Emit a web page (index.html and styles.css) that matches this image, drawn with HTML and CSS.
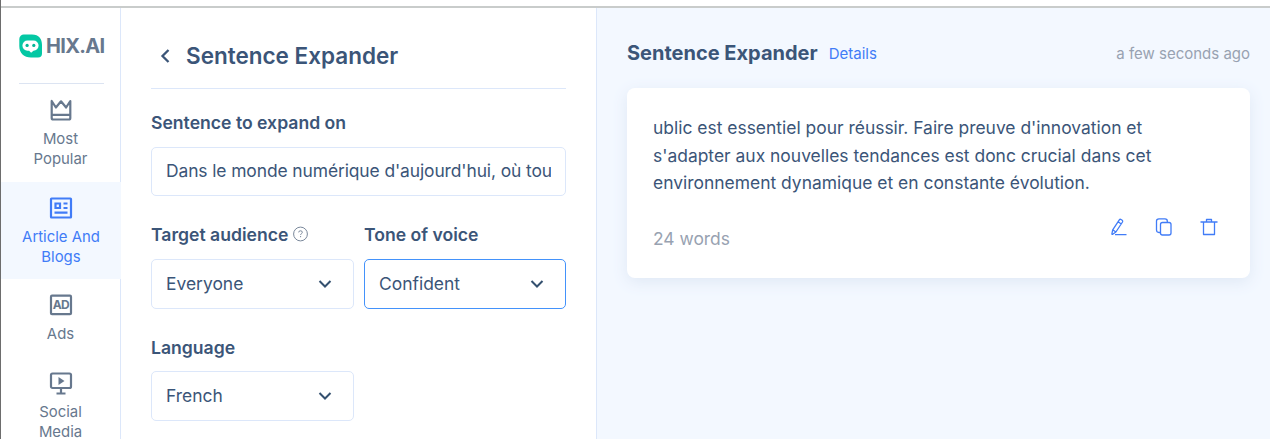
FILE: index.html
```html
<!DOCTYPE html>
<html lang="en">
<head>
<meta charset="utf-8">
<title>HIX.AI - Sentence Expander</title>
<link rel="stylesheet" href="styles.css">
</head>
<body>
<div class="app">
  <nav class="sidebar">
    <div class="logo">
      <svg width="24" height="24" viewBox="0 0 24 24"><path d="M5 .5h8C20 .5 23 5 23 11v8.500a4 4 0 0 1-4 4h-7C5 23.500.3 19 .3 12V5A4.500 4.500 0 0 1 5 .5z" fill="#04c8a4"/><path d="M8.500 6.500h6a5 5 0 0 1 0 10.200l-2.400 2.100-2-2.100H8.500a5 5 0 0 1 0-10.200z" fill="#fff"/><circle cx="8.100" cy="11.400" r="1.600" fill="#04b696"/><circle cx="14.800" cy="11.400" r="1.600" fill="#04b696"/></svg>
      <span class="brand">HIX.AI</span>
    </div>
    <a class="item">
      <svg width="24" height="24" viewBox="0 0 24 24" fill="none" stroke="currentColor" stroke-width="2.200" stroke-linejoin="round"><path d="M2.700 3v17q0 1.500 1.500 1.500h15.600q1.500 0 1.500-1.500V3l-4.200 6.500L12 3.300 6.900 9.500zM2.700 16.800h18.600"/></svg>
      <span>Most<br>Popular</span>
    </a>
    <a class="item active">
      <svg width="24" height="24" viewBox="0 0 24 24" fill="none" stroke="currentColor" stroke-width="2.200"><rect x="2" y="2.500" width="20" height="19" rx=".5"/><path d="M6.500 7.500h4.500v4.500H6.500zM14.500 7.500h4M14.500 12h4M5.500 16.700h13"/></svg>
      <span>Article And<br>Blogs</span>
    </a>
    <a class="item">
      <svg width="24" height="24" viewBox="0 0 24 24"><rect x="2" y="2.700" width="20" height="18.500" rx="1" fill="none" stroke="currentColor" stroke-width="2.200"/><text class="ad" x="11.800" y="16.200" text-anchor="middle">AD</text></svg>
      <span>Ads</span>
    </a>
    <a class="item">
      <svg width="24" height="24" viewBox="0 0 24 24" fill="none" stroke="currentColor" stroke-width="2.200"><rect x="2" y="2.500" width="20" height="14.500" rx="1.500"/><path d="M12 17v5.500M7.500 22.500h9"/><path d="M9.500 6v8l6-4z" fill="currentColor" stroke="none"/></svg>
      <span>Social<br>Media</span>
    </a>
  </nav>

  <section class="form">
    <header class="form-head">
      <svg width="12" height="16" viewBox="0 0 12 16" fill="none" stroke="currentColor" stroke-width="2.300"><path d="M9.500 2L3.500 8l6 6"/></svg>
      <h1>Sentence Expander</h1>
    </header>
    <div class="field">
      <label>Sentence to expand on</label>
      <div class="box"><span class="value">Dans le monde numérique d'aujourd'hui, où tou</span></div>
    </div>
    <div class="grid">
      <div class="field">
        <label>Target audience <svg width="16" height="16" viewBox="0 0 16 16" fill="none" stroke="#7a889b"><circle cx="7.500" cy="8" r="6.900"/><path d="M5.700 6.400q0-1.600 1.800-1.600t1.800 1.500q0 .9-1 1.500-.7.500-.7 1.200M7.600 10v1.200"/></svg></label>
        <div class="box select"><span>Everyone</span><svg width="14" height="10" viewBox="0 0 14 10"><path d="M1.500 2L7 7.500 12.500 2"/></svg></div>
      </div>
      <div class="field">
        <label>Tone of voice</label>
        <div class="box select focus"><span>Confident</span><svg width="14" height="10" viewBox="0 0 14 10"><path d="M1.500 2L7 7.500 12.500 2"/></svg></div>
      </div>
      <div class="field">
        <label class="low">Language</label>
        <div class="box select"><span>French</span><svg width="14" height="10" viewBox="0 0 14 10"><path d="M1.500 2L7 7.500 12.500 2"/></svg></div>
      </div>
    </div>
  </section>

  <main class="results">
    <header class="result-head">
      <h2>Sentence Expander</h2>
      <a class="details">Details</a>
      <time>a few seconds ago</time>
    </header>
    <article class="card">
      <p>ublic est essentiel pour réussir. Faire preuve d'innovation et<br>s'adapter aux nouvelles tendances est donc crucial dans cet<br>environnement dynamique et en constante évolution.</p>
      <footer>
        <span class="count">24 words</span>
        <div class="actions">
          <svg width="18" height="18" viewBox="0 0 18 18"><path d="M2.700 11.800L9.300 1.900q.7-1 1.700-.4l1.200.8q.9.700.3 1.700L5.900 14 2.700 16.300q-.8.300-.8-.5zM8.200 3.700l3 2.200M2.700 11.800L5.900 14M5 16.700h11.500"/></svg>
          <svg width="18" height="18" viewBox="0 0 18 18"><rect x="5.500" y="4.500" width="10.500" height="12.500" rx="2"/><path d="M5.500 14.500H4q-2.500 0-2.500-2.500V3Q1.500.8 4 .8h6q2.300 0 2.300 2.200v1.500"/></svg>
          <svg width="18" height="18" viewBox="0 0 18 18"><path d="M.5 4h17M3.500 4v12.500h11V4M6.500 4V1.500h5V4"/></svg>
        </div>
      </footer>
    </article>
  </main>
</div>
</body>
</html>
```
FILE: styles.css
```css
* { box-sizing: border-box; }
body {
  margin: 0;
  height: 439px;
  overflow: hidden;
  padding-top: 6px;
  border-left: 1px solid #6d6d6d;
  background: #fff;
  color: #3b5578;
  font-family: Inter, "Liberation Sans", sans-serif;
  font-weight: 400;
}
h1, h2, p { margin: 0; }
svg { flex: none; display: block; }
.app { display: flex; height: 433px; border-top: 2px solid #c9cccb; }

.sidebar { width: 120px; flex: none; border-right: 1px solid #dce7fa; color: #67788e; }
.logo {
  display: flex;
  align-items: center;
  gap: 3px;
  height: 76px;
  margin: 0 16px 0 18px;
  border-bottom: 1px solid #dce4f2;
}
.brand { font-size: 20px; font-weight: 700; letter-spacing: -0.7px; }
.item {
  display: flex;
  flex-direction: column;
  align-items: center;
  gap: 7px;
  padding: 14px 0 12.5px;
  font-size: 14.900px;
  line-height: 20px;
  text-align: center;
}
.item.active { margin-right: -1px; background: #f3f8ff; color: #417cf7; }
.ad { font-size: 12px; font-weight: 700; letter-spacing: -0.7px; fill: currentColor; }

.form { width: 476px; flex: none; padding: 18px 30px 0 30px; border-right: 1px solid #dce7fa; }
.form-head {
  display: flex;
  align-items: center;
  gap: 15px;
  height: 63px;
  padding: 0 0 2px 8px;
  border-bottom: 1px solid #dce7fa;
}
h1 { font-size: 22.5px; font-weight: 600; line-height: 32px; }
.form > .field { margin-top: 20px; }
.grid { display: grid; grid-template-columns: 203px 202px; column-gap: 10px; row-gap: 24px; margin-top: 25px; }
label { display: flex; align-items: center; gap: 5px; height: 28px; padding-bottom: 2px; font-size: 17.600px; font-weight: 600; }
label.low { padding-bottom: 0; }
.box {
  display: flex;
  align-items: center;
  height: 49px;
  margin-top: 10px;
  padding: 0 14px 2px;
  border: 1px solid #dce7fa;
  border-radius: 5px;
  font-size: 17.450px;
}
.value { overflow: hidden; white-space: nowrap; letter-spacing: -0.11px; }
.select { justify-content: space-between; height: 50px; padding: 0 21px 1px 14px; }
.select svg { fill: none; stroke: #34506f; stroke-width: 2; }
.focus { border-color: #4392fb; }

.results { flex: 1; padding: 27px 20px 0 30px; background: #f3f8ff; }
.result-head { display: flex; align-items: center; height: 36px; }
h2 { font-size: 20px; font-weight: 700; }
.details { margin-left: 11px; font-size: 15px; color: #417cf7; }
time { margin-left: auto; font-size: 15px; color: #98a2b1; }
.card {
  height: 190px;
  margin-top: 17px;
  padding: 26px 26px 0;
  border-radius: 8px;
  background: #fff;
  box-shadow: 0 4px 16px #dfe8f5;
}
.card p { font-size: 17.450px; line-height: 27.500px; white-space: nowrap; }
footer { display: flex; justify-content: space-between; margin-top: 21px; }
.count { margin-top: 10px; font-size: 17.400px; line-height: 22px; color: #98a2b1; }
.actions { display: flex; gap: 27px; padding-right: 6px; }
.actions svg { fill: none; stroke: #417cf7; stroke-width: 1.300; stroke-linejoin: round; }
```
